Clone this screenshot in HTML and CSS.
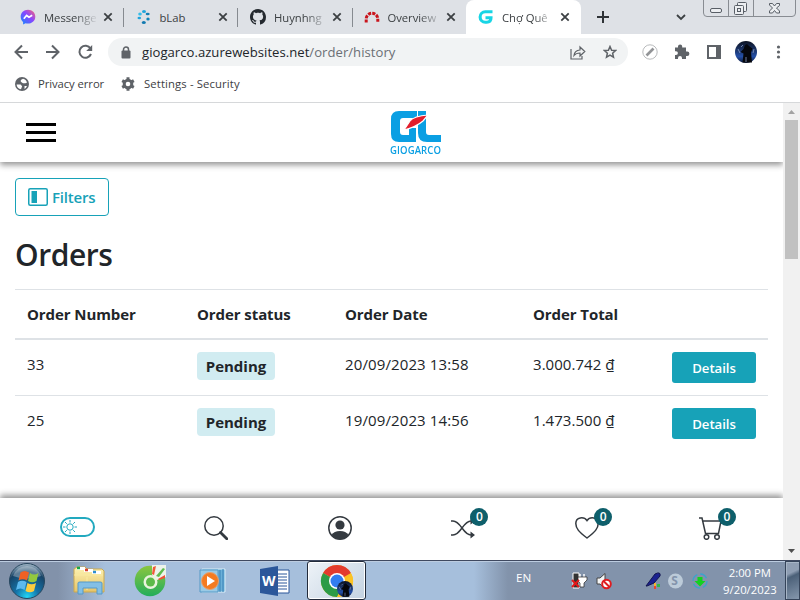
FILE: index.html
```html
<!DOCTYPE html>
<html lang="en">
<head>
<meta charset="utf-8">
<title>Chợ Quê</title>
<link rel="stylesheet" href="styles.css">
</head>
<body>
<svg width="0" height="0" class="defs">
  <defs>
    <linearGradient id="msg" x1="0" y1="1" x2="1" y2="0"><stop offset="0" stop-color="#0a8cff"/><stop offset=".55" stop-color="#8a46ff"/><stop offset="1" stop-color="#ff6670"/></linearGradient>
    <radialGradient id="orb" cx=".5" cy=".95" r=".95"><stop offset="0" stop-color="#22d6f5"/><stop offset=".35" stop-color="#1473a8"/><stop offset=".75" stop-color="#174468"/><stop offset="1" stop-color="#a8bccb"/></radialGradient>
    <linearGradient id="green" x1="0" y1="0" x2="0" y2="1"><stop offset="0" stop-color="#8bc63f"/><stop offset="1" stop-color="#22ad5b"/></linearGradient>
    <linearGradient id="folder" x1="0" y1="0" x2="0" y2="1"><stop offset="0" stop-color="#fdf3b4"/><stop offset="1" stop-color="#e6c468"/></linearGradient>
    <linearGradient id="night" x1="0" y1="0" x2="0" y2="1"><stop offset="0" stop-color="#0b1120"/><stop offset=".4" stop-color="#1b3468"/><stop offset=".7" stop-color="#2450a8"/><stop offset="1" stop-color="#0d1a3a"/></linearGradient>
    <symbol id="x" viewBox="0 0 10 10"><path d="M1.3 1.3 8.7 8.7M8.7 1.3 1.3 8.7" stroke="#3c4043" stroke-width="1.8"/></symbol>
    <symbol id="avatar" viewBox="0 0 22 22"><circle cx="11" cy="11" r="11" fill="url(#night)"/><path d="M10 4l2-1 2 2 3.500 2.500-1.500 4 1 10H7.500l1-9-3-1.500 3-3z" fill="#05070d"/><path d="M3 8l2 4M18 12l1-4M11 16v5M6 6l2-2" stroke="#8a9cc4" stroke-width=".8"/></symbol>
  </defs>
</svg>
<div class="screen">
  <div class="tabstrip">
    <div class="tab first">
      <svg width="16" height="16" viewBox="0 0 16 16"><path d="M8 .7C3.700.7.7 3.800.7 7.700c0 2.200.9 4 2.400 5.300v2.500l2.400-1.200c4.500 1.300 9.800-1.400 9.800-6.600C15.300 3.800 12.300.7 8 .7z" fill="url(#msg)"/><path d="M3.800 9.700 6.600 6.500l2.400 1.800 3.200-2" fill="none" stroke="#fff" stroke-width="1.700"/></svg>
      <span class="tt fade">Messenge</span><svg class="cl" width="10" height="10"><use href="#x"/></svg>
    </div>
    <div class="tab">
      <svg width="16" height="16" viewBox="0 0 16 16"><g fill="#1fa4dc"><ellipse cx="8" cy="2.400" rx="2" ry="1.500"/><ellipse cx="4" cy="5" rx="1.800" ry="1.500" fill="#35bde8"/><ellipse cx="11.700" cy="5" rx="2" ry="1.300" fill="#137fb5"/><ellipse cx="3.300" cy="9" rx="1.800" ry="1.200"/><ellipse cx="12" cy="10" rx="1.700" ry="1.500" fill="#1185b9"/><ellipse cx="7.800" cy="13.500" rx="2" ry="1.500" fill="#127ab0"/></g></svg>
      <span class="tt">bLab</span><svg class="cl" width="10" height="10"><use href="#x"/></svg>
    </div>
    <div class="tab">
      <svg width="16" height="16" viewBox="0 0 16 16"><path fill="#24292f" d="M8 0C3.580 0 0 3.580 0 8c0 3.540 2.290 6.530 5.470 7.590.4.070.55-.17.55-.38 0-.19-.01-.82-.01-1.490-2.010.37-2.530-.49-2.690-.94-.09-.23-.48-.94-.82-1.130-.28-.15-.68-.52-.01-.53.63-.01 1.080.58 1.230.82.72 1.210 1.870.87 2.330.66.07-.52.28-.87.51-1.070-1.780-.2-3.640-.89-3.640-3.950 0-.87.31-1.590.82-2.150-.08-.2-.36-1.020.08-2.120 0 0 .67-.21 2.200.82.64-.18 1.320-.27 2-.27s1.360.09 2 .27c1.530-1.040 2.200-.82 2.200-.82.44 1.100.16 1.920.08 2.120.51.56.82 1.270.82 2.150 0 3.070-1.870 3.750-3.650 3.950.29.25.54.73.54 1.480 0 1.070-.01 1.930-.01 2.200 0 .21.15.46.55.38A8.010 8.010 0 0 0 16 8c0-4.420-3.580-8-8-8z"/></svg>
      <span class="tt fade">Huynhng</span><svg class="cl" width="10" height="10"><use href="#x"/></svg>
    </div>
    <div class="tab last">
      <svg width="16" height="16" viewBox="0 0 16 16"><path d="M2.200 13.500V10a5.800 5.800 0 0 1 11.600 0v3.500" fill="none" stroke="#c9141c" stroke-width="3" stroke-dasharray="3.100 1.100"/></svg>
      <span class="tt fade">Overview</span><svg class="cl" width="10" height="10"><use href="#x"/></svg>
    </div>
    <div class="tab active">
      <svg width="16" height="16" viewBox="0 0 16 16"><path d="M14.500 2.800H7.300a5.200 5.200 0 0 0 0 10.400h1.500c2.500 0 4.200-1.600 4.200-4.400H7.500" fill="none" stroke="#18d5e5" stroke-width="3.100"/></svg>
      <span class="tt fade">Chợ Quê</span><svg class="cl" width="10" height="10"><use href="#x"/></svg>
    </div>
    <svg class="plus" width="12" height="12"><path d="M6 0v12M0 6h12" stroke="#2f3337" stroke-width="2"/></svg>
    <svg class="chev" width="10" height="7"><path d="M1 1l4 4 4-4" fill="none" stroke="#3c4043" stroke-width="1.800"/></svg>
    <svg class="winbtn" width="94" height="18"><path d="M.5 0v13q0 3.500 3.500 3.500h85q3.500 0 3.500-3.500V0M25.500 0v16M50.500 0v16" fill="none" stroke="#888c92"/><g fill="#eceef1" stroke="#585e66"><rect x="7.500" y="8.500" width="11" height="4" rx="1.500"/><rect x="34.500" y="2.500" width="9" height="9" rx="1"/><rect x="31.500" y="5.500" width="9" height="9" rx="1"/><rect x="34.500" y="8.500" width="3" height="3"/><path d="M66.500 3.500h3l2 2.500 2-2.500h3v2L73.500 8l3 3v2h-3l-2-2.500-2 2.500h-3v-2l3-3-3-3z"/></g></svg>
  </div>
  <div class="toolbar">
    <svg class="navs" width="80" height="16" viewBox="0 0 80 16" fill="none" stroke="#5f6368" stroke-width="2"><path d="M14 8H2M8 1.500 1.500 8 8 14.500M32 8h12M38 1.500 44.500 8 38 14.500M76.500 4.500A6 6 0 1 0 77 10"/><path d="M78.200 1v6h-6z" fill="#5f6368" stroke="none"/></svg>
    <div class="omni">
      <svg width="10" height="13"><path d="M2.500 5V3.500a2.500 2.500 0 0 1 5 0V5" fill="none" stroke="#5f6368" stroke-width="1.500"/><rect x=".5" y="4.500" width="9" height="8" rx="1" fill="#5f6368"/></svg>
      <span class="url">giogarco.azurewebsites.net<i>/order/history</i></span>
      <svg class="share" width="16" height="15" fill="none" stroke="#5f6368" stroke-width="1.200"><path d="M1 4v10h11v-3M4 10.500q.5-5 6-5.500V2l4.800 4.500L10 11V8q-4 0-6 2.500z"/></svg>
      <svg class="star" width="14" height="14" viewBox="0 0 14 14"><path d="M7 1.500 8.600 5.200l4 .3-3 2.700.9 4L7 10.100l-3.500 2.100.9-4-3-2.700 4-.3z" fill="none" stroke="#5f6368" stroke-width="1.500"/></svg>
    </div>
    <svg class="tools" width="145" height="24" viewBox="0 0 145 24"><circle cx="14" cy="12" r="7.200" fill="none" stroke="#b9bbbd"/><path d="M10.500 15.500l7-7" stroke="#929497" stroke-width="2.600"/><path fill="#5f6368" d="M39 7.500h3V6.500a2 2 0 0 1 4.200 0v1h3.800v4h1.200a2.200 2.200 0 0 1 0 4.400H50V19h-4v-1a2 2 0 0 0-4 0v1h-3v-4h1a1.900 1.900 0 0 0 0-3.800h-1z"/><path d="M71 5h14v14H71zm2 2v10h7V7z" fill="#5f6368" fill-rule="evenodd"/><use href="#avatar" x="99" y="1" width="22" height="22"/><g fill="#5f6368"><circle cx="142.500" cy="7" r="1.600"/><circle cx="142.500" cy="12" r="1.600"/><circle cx="142.500" cy="17" r="1.600"/></g></svg>
  </div>
  <div class="bookmarks">
    <svg width="14" height="14" viewBox="0 0 14 14"><circle cx="7" cy="7" r="7" fill="#5f6368"/><path d="M8 1.700 5.800 3v1.800L8 6.200h2.500L12 5.500c-.5-2-2-3.500-4-3.800zM1.600 7.500h4l1.500 1.800L6 12.300C3.500 12 1.700 10 1.600 7.500zM9.500 9h2.500q-.8 2-2.500 3z" fill="#fff"/></svg>
    <span class="bm1">Privacy error</span>
    <svg width="14" height="14" viewBox="0 0 14 14"><circle cx="7" cy="7" r="3.700" fill="none" stroke="#5f6368" stroke-width="3.200"/><path d="M7 .3v13.400M1.200 3.650l11.600 6.700M1.200 10.350l11.600-6.700" stroke="#5f6368" stroke-width="3"/><circle cx="7" cy="7" r="2.300" fill="#fff"/></svg>
    <span class="bm2">Settings - Security</span>
  </div>
  <div class="view">
    <main class="page">
      <header class="head">
        <div class="burger"><b></b><b></b><b></b></div>
        <div class="logo">
          <svg width="52" height="33" viewBox="0 0 52 33"><path d="M27 1H9Q1 1 1 9v15q0 8 8 8h17V18h-7v7h-6q-3 0-3-3V11q0-3 3-3h14z" fill="#0a9fe3"/><path d="M28 16v7q0 9 9 9h14v-7H39q-3 0-3-3V1h-8v7z" fill="#0a9fe3"/><path d="M14 20 20 11q4-5 18-6l-5 6q-7 6-19 9z" fill="#e31e2c" stroke="#fff" stroke-width="1.200"/></svg>
          <span>GIOGARCO</span>
        </div>
      </header>
      <section class="content">
        <button class="filters"><svg width="20" height="18"><rect x=".75" y=".75" width="18.500" height="16.500" rx="1.500" fill="none" stroke="#17a2b8" stroke-width="1.500"/><path d="M3.500 3h5.500v12H3.500z" fill="#17a2b8"/></svg><span>Filters</span></button>
        <h1>Orders</h1>
        <table>
          <colgroup><col class="c1"><col class="c2"><col class="c3"><col class="c4"><col class="c5"></colgroup>
          <thead><tr><th>Order Number</th><th>Order status</th><th>Order Date</th><th>Order Total</th><th></th></tr></thead>
          <tbody>
            <tr><td>33</td><td><span class="pending">Pending</span></td><td>20/09/2023 13:58</td><td class="total">3.000.742 ₫</td><td><a class="details">Details</a></td></tr>
            <tr><td>25</td><td><span class="pending">Pending</span></td><td>19/09/2023 14:56</td><td class="total">1.473.500 ₫</td><td><a class="details">Details</a></td></tr>
          </tbody>
        </table>
      </section>
      <nav class="dock">
        <svg width="35" height="20"><rect x="1" y="1" width="33" height="18" rx="9" fill="none" stroke="#22a9bf" stroke-width="2"/><g fill="none" stroke="#22a9bf"><circle cx="10" cy="10" r="3.200"/><path d="M10 3v2.500M10 14.500V17M3 10h2.500M14.500 10H17M5 5l1.800 1.800M13.200 13.200 15 15M5 15l1.800-1.800M13.200 6.800 15 5"/></g></svg>
        <svg width="24" height="24" fill="none" stroke="#343a40"><circle cx="10" cy="10" r="9.200" stroke-width="1.500"/><path d="M16.500 16.500l6.300 6.300" stroke-width="2.800" stroke-linecap="round"/></svg>
        <svg width="24" height="24"><circle cx="12" cy="12" r="11.200" fill="#fff" stroke="#343a40" stroke-width="1.500"/><circle cx="12" cy="9" r="4.600" fill="#343a40"/><path d="M3.500 19Q6 15 12 15t8.500 4q-3.300 4.300-8.500 4.300T3.500 19z" fill="#343a40"/></svg>
        <div class="ico"><svg width="24" height="24"><path d="M0 5h2c8 0 10 14 18 14h1M0 19h2c8 0 10-14 18-14h1" fill="none" stroke="#343a40" stroke-width="1.500"/><path d="M19.500 1.500 24 5l-4.500 3.500zM19.500 15.500 24 19l-4.500 3.500z" fill="#343a40"/></svg><em>0</em></div>
        <div class="ico"><svg width="24" height="24"><path d="M12 22C4 16 .8 12.500.8 7.500.8.800 9 .3 12 4.600 15 .3 23.200.8 23.200 7.500c0 5-3.200 8.500-11.200 14.500z" fill="none" stroke="#343a40" stroke-width="1.500"/></svg><em>0</em></div>
        <div class="ico"><svg width="24" height="24" fill="none" stroke="#343a40" stroke-width="1.500"><path d="M0 2h3l3.500 15.500h13L22 5H4"/><circle cx="7.500" cy="21" r="2.300"/><circle cx="18" cy="21" r="2.300"/></svg><em>0</em></div>
      </nav>
    </main>
    <div class="scroll"><svg width="17" height="17"><path d="M5 11l3.500-4 3.500 4z" fill="#a3a3a3"/></svg><div class="thumb"></div><svg class="down" width="17" height="17"><path d="M5 6l3.500 4L12 6z" fill="#505050"/></svg></div>
  </div>
  <footer class="taskbar">
    <svg class="start" width="38" height="38" viewBox="0 0 38 38"><circle cx="19" cy="19" r="17.500" fill="url(#orb)" stroke="#27475f"/><path d="M5 14q4-10 14-10t14 10q-14 5-28 0z" fill="#fff" opacity=".3"/><path d="M12.500 10.500q4-3 8.500 0L19 18.500q-4-2.500-8.500 0z" fill="#ee6125"/><path d="M22 11q4 3 8.500 0l-2 8q-4 2.500-8.500 0z" fill="#93c83e"/><path d="M10 20q4-2.500 8.500 0l-2 8q-4-3-8.500 0z" fill="#5cb9ee"/><path d="M19.500 21q4 2.500 8.500 0l-2 8q-4 2.500-8.500 0z" fill="#fccc3f"/></svg>
    <svg class="explorer" width="34" height="32" viewBox="0 0 34 32"><path d="M2 4l3-2h8l2 2h15l2 2v21H2z" fill="url(#folder)" stroke="#c9a851"/><path d="M5 3.500h8M12 5.500h9M20 7.500h9" stroke="#fff" stroke-width="3"/><path d="M5 3h3" stroke="#17a84b" stroke-width="2.500"/><path d="M13 5h3" stroke="#d74130" stroke-width="2.500"/><path d="M21 7h3" stroke="#2e8fd2" stroke-width="2.500"/><path d="M2 10h29M15 12v13" stroke="#f9eaa1"/><path d="M6 29V18q0-1 2-1h20q2 0 2 1v11h-5v-6H11v6z" fill="#83bfe5" stroke="#5499c9"/></svg>
    <svg class="coc" width="34" height="34" viewBox="0 0 34 34"><circle cx="16" cy="17" r="15.300" fill="url(#green)"/><path d="M18 1h14v12l-9 3-5-5z" fill="#edf3ea"/><circle cx="16.500" cy="18" r="7" fill="#e9f4dd"/><circle cx="16.500" cy="18" r="4.500" fill="#5cba49"/><path d="M18 10l1-7 3-1-2 9z" fill="#f05a38"/><path d="M22 12l7-8 2 1-6 8z" fill="#5ebc4d"/><path d="M24 15l7-4v3l-6 2z" fill="#ef5037"/></svg>
    <svg class="media" width="30" height="28" viewBox="0 0 30 28"><path d="M3 2h23v23H3z" fill="#6ab0d8" stroke="#d7edf7"/><path d="M21 3v22M24 2v23" stroke="#3b81b6"/><path d="M1 3h18v22H1z" fill="#9acae5" stroke="#5599c6"/><circle cx="11" cy="14" r="8.500" fill="#f47b20" stroke="#e6a06b"/><path d="M8 9l8 5-8 5z" fill="#fff"/></svg>
    <div class="word"><svg width="30" height="30" viewBox="0 0 30 30"><path d="M16 4h13v23H16z" fill="#fff" stroke="#2b579a"/><path d="M18 8h9M18 11h9M18 14h9M18 17h9M18 20h9M18 23h9" stroke="#2b579a"/><path d="M0 3l18-3v30L0 27z" fill="#2b579a"/></svg><span>W</span></div>
    <div class="task"><svg width="34" height="34" viewBox="0 0 34 34"><circle cx="17" cy="17" r="16" fill="#fbbf20"/><path d="M17 17 3.100 9A16 16 0 0 1 30.900 9z" fill="#e33b2e"/><path d="M17 17 3.100 9A16 16 0 0 0 17 33l7-12z" fill="#2c9b47"/><path d="M17 9h13.900L24 20.500 17 33A16 16 0 0 0 30.900 9z" fill="#fbc326"/><circle cx="17" cy="17" r="8" fill="#fff"/><circle cx="17" cy="17" r="6.500" fill="#327df0"/><use href="#avatar" x="17" y="17" width="16" height="16"/></svg></div>
    <span class="lang">EN</span>
    <svg class="tray" width="140" height="18" viewBox="0 0 140 18"><path d="M2 1h6v15H2z" fill="#333" stroke="#fff"/><path d="M9 2v4M13 2v4" stroke="#fff" stroke-width="1.500"/><path d="M7 5h9v3l-3 3v4H9v-4L7 9z" fill="#fff" stroke="#222" stroke-width=".7"/><path d="M1 8l7 7M8 8l-7 7" stroke="#e3171a" stroke-width="2"/><path d="M26 6h3l5-4.500v15L29 12h-3z" fill="#f5f5f5" stroke="#444"/><circle cx="35.500" cy="12" r="4.300" fill="#fff" stroke="#df1c20" stroke-width="2"/><path d="M32.500 9l6 6" stroke="#df1c20" stroke-width="2"/><path d="M75 14 84 2q6-3 5 2l-6 7-7 3z" fill="#1b2290" stroke="#12154f"/><path d="M83 11h2v3h-2z" fill="#f7b52c"/><path d="M86 12h3v3h-3z" fill="#2fb94b"/><path d="M83 14h2v3h-2z" fill="#e84731"/><circle cx="104.500" cy="9" r="7.500" fill="#bccbd9"/><circle cx="129" cy="9" r="7" fill="none" stroke="#3ba3ce" stroke-width="1.300" stroke-dasharray="8 3"/><path d="M126.500 5h5v4h3l-5.500 5.500L123.500 9h3z" fill="#13d21f"/></svg><span class="skype">S</span>
    <div class="clock"><span>2:00 PM</span><span>9/20/2023</span></div>
    <div class="peek"></div>
  </footer>
</div>
</body>
</html>
```
FILE: styles.css
```css
* { box-sizing: border-box; }
body { margin: 0; overflow: hidden; font-family: "Open Sans", "Noto Sans", sans-serif; color: #212529; }
svg { display: block; flex: none; }
.defs { position: absolute; }
.screen { width: 800px; height: 600px; display: flex; flex-direction: column; background: #fff; }
.tabstrip { height: 34px; background: #dee1e6; display: flex; align-items: center; flex: none; }
.tab { width: 114.500px; height: 34px; display: flex; align-items: center; padding-left: 12px; position: relative; font-size: 11.300px; color: #3c4043; }
.tab.first { width: 123.500px; padding-left: 20px; }
.tab.last { width: 113.500px; padding-left: 11px; border-radius: 0 0 8px 0; }
.tab:not(.last):not(.active)::after { content: ""; position: absolute; right: 0; top: 8px; width: 1px; height: 19px; background: #868a90; }
.tt { width: 52px; margin-left: 8px; white-space: nowrap; letter-spacing: -.05px; }
.fade { -webkit-mask-image: linear-gradient(90deg, #000 60%, rgba(0,0,0,.1)); mask-image: linear-gradient(90deg, #000 60%, rgba(0,0,0,.1)); }
.cl { margin-left: 6px; }
.first .cl { margin-left: 7px; }
.tab.active { width: 115px; background: #fff; border-radius: 8px 8px 0 0; }
.plus { margin-left: 16px; }
.chev { margin-left: 67px; }
.winbtn { margin-left: 17px; align-self: flex-start; }
.toolbar { height: 36px; display: flex; align-items: center; flex: none; }
.navs { margin-left: 14px; }
.omni { margin-left: 14px; width: 520px; height: 28px; border-radius: 14px; background: #f1f3f4; display: flex; align-items: center; padding-left: 13px; }
.url { margin-left: 11px; width: 428px; font-size: 13.100px; letter-spacing: .03px; white-space: nowrap; }
.url i { font-style: normal; color: #6b6f74; }
.star { margin-left: 17px; }
.tools { margin-left: 8px; }
.bookmarks { height: 33px; border-bottom: 1px solid #d6d8da; display: flex; align-items: center; padding: 0 0 5px 15px; flex: none; font-size: 11.300px; color: #3c4043; white-space: nowrap; }
.bm1 { margin-left: 9px; width: 83px; letter-spacing: -.08px; }
.bm2 { margin-left: 9px; letter-spacing: .12px; }
.view { height: 457px; display: flex; flex: none; }
.page { width: 783px; display: flex; flex-direction: column; overflow: hidden; }
.head { height: 59px; flex: none; display: flex; align-items: center; padding-left: 26px; box-shadow: 0 3px 6px rgba(0,0,0,.42); }
.burger { width: 30px; display: flex; flex-direction: column; gap: 5px; }
.burger b { height: 3px; background: #000; }
.logo { margin-left: 334px; width: 52px; height: 45px; color: #0a9fe3; }
.logo span { display: block; width: 65px; transform: scaleX(.92); transform-origin: 0 0; margin-top: 2px; font: 600 10.400px/11px "Open Sans", sans-serif; letter-spacing: .1px; }
.content { flex: 1; padding: 16px 15px 0; }
.filters { width: 94px; height: 38px; display: flex; align-items: center; padding: 0 0 0 12px; background: #fff; border: 1px solid #17a2b8; border-radius: 4px; color: #17a2b8; font: 600 15px "Open Sans", sans-serif; letter-spacing: -.2px; }
.filters span { margin-left: 4px; }
h1 { margin: 19px 0 14px; height: 40px; font-size: 30px; line-height: 40px; font-weight: 600; letter-spacing: -.45px; }
table { width: 753px; table-layout: fixed; border-collapse: separate; border-spacing: 0; font-size: 15px; letter-spacing: .12px; line-height: 24px; white-space: nowrap; }
.c1 { width: 170px; } .c2 { width: 148px; } .c3 { width: 188px; } .c4 { width: 139px; } .c5 { width: 108px; }
th { height: 51px; padding: 0 12px; text-align: left; font-size: 15px; letter-spacing: -.08px; border-top: 1px solid #dee2e6; border-bottom: 2px solid #dee2e6; }
td { height: 56px; padding: 12px 12px 0; vertical-align: top; }
.total { letter-spacing: .05px; }
tbody tr:first-child td { height: 55px; }
tbody tr + tr td { border-top: 1px solid #dee2e6; }
.pending { display: block; width: 78px; height: 28px; line-height: 29px; background: #d1ecf1; border-radius: 4px; text-align: center; font-weight: 700; font-size: 15px; letter-spacing: 0; }
.details { display: block; width: 84px; height: 31px; border-radius: 3px; background: #17a2b8; color: #fff; font-size: 13.200px; font-weight: 600; letter-spacing: -.05px; line-height: 32px; text-align: center; }
.dock { height: 62px; flex: none; display: flex; align-items: center; justify-content: space-between; padding: 0 60px 2px; background: #fff; box-shadow: 0 -3px 6px rgba(0,0,0,.42); }
.dock > svg:first-child { margin: -2px 9px 0 0; }
.ico { position: relative; }
.ico em { position: absolute; left: 19px; top: -8px; width: 18px; height: 18px; border-radius: 50%; background: #0e5f6b; color: #fff; font: 600 12px/18px "Open Sans", sans-serif; text-align: center; }
.scroll { width: 17px; height: 457px; background: #f1f1f1; display: flex; flex-direction: column; }
.thumb { width: 13px; height: 139px; margin-left: 2px; background: #c1c1c1; }
.down { margin-top: auto; }
.taskbar { height: 40px; flex: none; display: flex; align-items: center; border-top: 1px solid #3f4960; box-shadow: inset 0 1px #bccce0; background: linear-gradient(90deg, #8292aa 0 58px, #a6bfdc 105px 474px, #8293ab 508px); }
.start { margin-left: 8px; }
.explorer { margin-left: 26px; }
.coc { margin-left: 28px; }
.media { margin-left: 31px; }
.word { margin-left: 31px; display: grid; align-items: center; }
.word > * { grid-area: 1 / 1; }
.word span { z-index: 1; margin-left: 2px; color: #fff; font-size: 14px; font-weight: 700; }
.task { margin-left: 17px; width: 60px; height: 39px; border: 1px solid #222b3b; border-radius: 3px; background: linear-gradient(135deg, #eef3f8, #c3d2e1); box-shadow: inset 0 0 0 1px #fff; display: flex; align-items: center; justify-content: center; }
.lang { width: 20px; margin: -7px 0 0 150px; color: #fff; font-size: 11.600px; }
.tray { margin-left: 35px; }
.skype { width: 10px; margin-left: -41px; color: #8394ac; font-weight: 700; font-size: 12px; text-align: center; }
.clock { margin-left: 35px; width: 72px; display: flex; flex-direction: column; align-items: center; color: #fff; font-size: 11.300px; line-height: 17px; }
.peek { margin-left: auto; width: 15px; height: 39px; border: 1px solid #35445a; box-shadow: inset 1px 1px #a7b5c6; background: linear-gradient(155deg, #8f9eb3 0 30%, #4b6078 40%, #8597ad); }
```
